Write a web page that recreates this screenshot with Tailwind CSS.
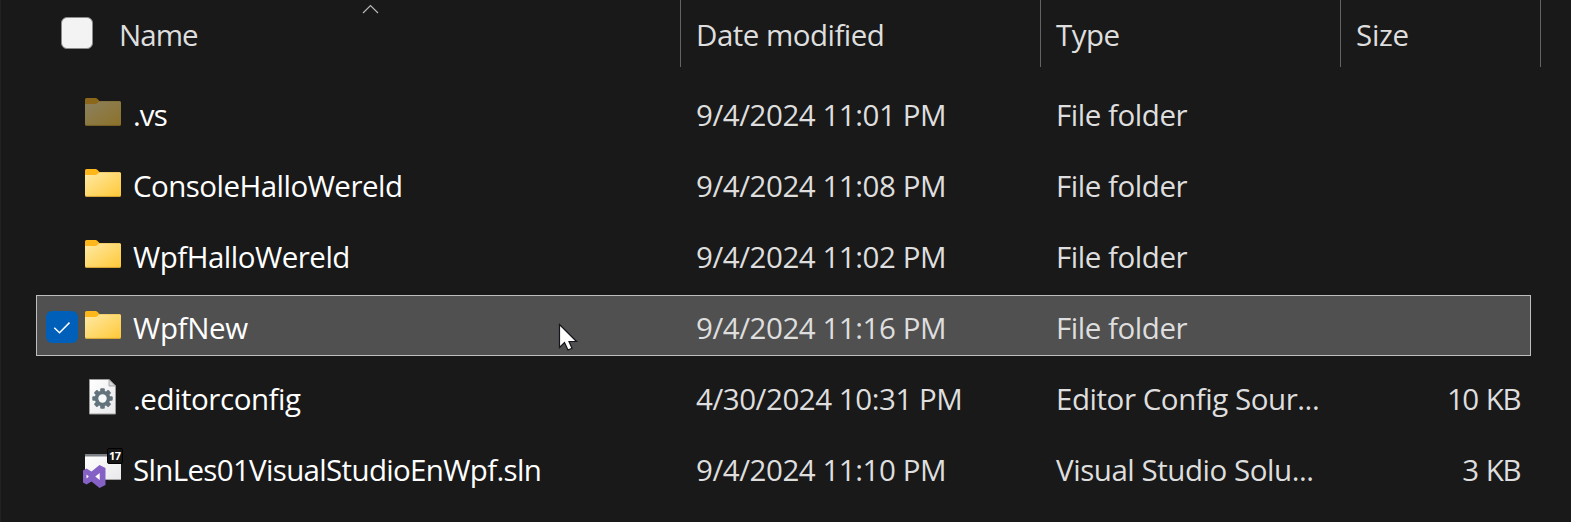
<!DOCTYPE html>
<html lang="en">
<head>
<meta charset="utf-8">
<title>Files</title>
<script src="https://cdn.jsdelivr.net/npm/@tailwindcss/browser@4"></script>
</head>
<body class="h-[522px] w-[1571px] overflow-hidden bg-[#191919] font-['Open_Sans','Noto_Sans',sans-serif] text-[29.5px] leading-[40px] text-[#dedede] whitespace-nowrap">
<svg class="absolute size-0">
  <defs>
    <linearGradient id="fg" x1="0" y1="0" x2="1" y2="1"><stop offset="0" stop-color="#ffe9a6"/><stop offset="1" stop-color="#ffc937"/></linearGradient>
    <linearGradient id="pg" x1="0" y1="0" x2="1" y2="1"><stop offset="0" stop-color="#fff"/><stop offset="1" stop-color="#e9e9ec"/></linearGradient>
    <symbol id="folder" viewBox="0 0 36 28">
      <path d="M0 1.5Q0 0 1.5 0H10.5Q11.5 0 12.300 .8L14.700 3.200H34.500Q36 3.200 36 4.700V12H0Z" fill="#fdb71a"/>
      <path d="M0 6H10.500Q11.500 6 12.300 5.200L13.500 3.900Q14.200 3.300 15 3.300H34.500Q36 3.300 36 4.800V26.300Q36 27.800 34.500 27.800H1.500Q0 27.800 0 26.300Z" fill="url(#fg)"/>
      <path d="M.5 26.500Q.7 27.400 1.600 27.400H34.400Q35.300 27.400 35.500 26.500" fill="none" stroke="#d9a32c" stroke-width=".8"/>
    </symbol>
  </defs>
</svg>
<main class="relative flex h-full flex-col border-l border-[#222222]">
  <header class="flex h-[67px]">
    <div class="relative flex w-[680px] border-r border-[#636363] pl-[60px] pt-[17px]">
      <span class="size-[32px] rounded-[6px] border border-[#8b8b8b] bg-[#f3f3f3]"></span>
      <span class="ml-[26px] -mt-[2px] tracking-[-0.95px]">Name</span>
      <svg class="absolute left-[361px] top-[4px] h-[10px] w-[17px]" viewBox="0 0 17 10" fill="none" stroke="#b8b8b8" stroke-width="1.200"><path d="M1 9 8.500 1.500 16 9"/></svg>
    </div>
    <div class="w-[360px] border-r border-[#636363] pl-[15px] pt-[15px] tracking-[-0.52px]">Date modified</div>
    <div class="w-[300px] border-r border-[#636363] pl-[15px] pt-[15px] tracking-[-0.5px]">Type</div>
    <div class="w-[200px] border-r border-[#636363] pl-[15px] pt-[15px] tracking-[-0.3px]">Size</div>
  </header>
  <section class="mt-[15px] ml-[35px] flex w-[1495px] flex-col gap-[10px] tracking-[-0.45px]">
    <div class="flex h-[61px] border border-transparent">
      <div class="flex w-[659px] pl-[48px] text-white"><svg class="mt-[15px] h-[28px] w-[36px] opacity-50"><use href="#folder"/></svg><span class="ml-[12px] mt-[12px] tracking-[-0.9px]">.vs</span></div>
      <div class="w-[360px] pt-[12px]">9/4/2024 11:01 PM</div>
      <div class="w-[300px] pt-[12px]">File folder</div>
    </div>
    <div class="flex h-[61px] border border-transparent">
      <div class="flex w-[659px] pl-[48px] text-white"><svg class="mt-[15px] h-[28px] w-[36px]"><use href="#folder"/></svg><span class="ml-[12px] mt-[12px] tracking-[-0.53px]">ConsoleHalloWereld</span></div>
      <div class="w-[360px] pt-[12px]">9/4/2024 11:08 PM</div>
      <div class="w-[300px] pt-[12px]">File folder</div>
    </div>
    <div class="flex h-[61px] border border-transparent">
      <div class="flex w-[659px] pl-[48px] text-white"><svg class="mt-[15px] h-[28px] w-[36px]"><use href="#folder"/></svg><span class="ml-[12px] mt-[12px] tracking-[-0.5px]">WpfHalloWereld</span></div>
      <div class="w-[360px] pt-[12px]">9/4/2024 11:02 PM</div>
      <div class="w-[300px] pt-[12px]">File folder</div>
    </div>
    <div class="flex h-[61px] border border-[#bebebe] bg-[#505050]">
      <div class="flex w-[659px] pl-[9px] text-white">
        <span class="mt-[15px] mr-[7px] size-[32px] rounded-[6px] bg-[#005fb8]"><svg class="size-[32px]" viewBox="0 0 32 32" fill="none" stroke="#fff" stroke-width="1.500"><path d="M8.300 16.700 13.500 21.700 23.500 11.600"/></svg></span>
        <svg class="mt-[15px] h-[28px] w-[36px]"><use href="#folder"/></svg><span class="ml-[12px] mt-[12px] tracking-[-0.35px]">WpfNew</span></div>
      <div class="w-[360px] pt-[12px]">9/4/2024 11:16 PM</div>
      <div class="w-[300px] pt-[12px]">File folder</div>
    </div>
    <div class="flex h-[61px] border border-transparent">
      <div class="flex w-[659px] pl-[52px] text-white">
        <svg class="mt-[12px] h-[36px] w-[27px]" viewBox="0 0 27 36">
          <path d="M.5.500H20L26.500 7V35H.5Z" fill="url(#pg)" stroke="#9b9b9b"/>
          <path d="M20 .5V7H26.500Z" fill="#d8dadd" stroke="#9b9b9b" stroke-width=".8"/>
          <g transform="translate(13.500 19.500)" fill="#63747c"><circle r="7.800"/><g id="t"><rect x="-2.300" y="-10.200" width="4.600" height="20.400" rx="1"/><rect x="-10.200" y="-2.300" width="20.400" height="4.600" rx="1"/></g><use href="#t" transform="rotate(45)"/><circle r="4.200" fill="#f8f9fa"/></g>
        </svg><span class="ml-[17px] mt-[12px]">.editorconfig</span></div>
      <div class="w-[360px] pt-[12px]">4/30/2024 10:31 PM</div>
      <div class="w-[300px] pt-[12px]">Editor Config Sour...</div>
      <div class="flex-1 pt-[12px] pr-[10px] text-right tracking-[-1.5px] [word-spacing:2px]">10 KB</div>
    </div>
    <div class="flex h-[61px] border border-transparent">
      <div class="flex w-[659px] pl-[46px] text-white">
        <svg class="mt-[10px] h-[41px] w-[41px]" viewBox="0 0 41 41">
          <path d="M2 6H38V32H2Z" fill="url(#pg)"/><path d="M2 6H38V8.500H2Z" fill="#7d8085"/><path d="M2 31.500H38" stroke="#a5a5a5"/>
          <rect x="24.500" y=".5" width="15" height="15" rx="1.500" fill="#161616" stroke="#000"/>
          <text x="31.800" y="11.800" text-anchor="middle" font-size="11" font-weight="700" fill="#fff" font-family="Open Sans">17</text>
          <path d="M0 22.500 3.500 20.500 8.500 23.500 16.500 17 22.500 20V37L16.500 40 8.500 33.500 3.500 36.500 0 34.500Z" fill="#8661c5"/>
          <path d="M3.500 26.500V30.500L5.800 28.500ZM12.300 28.500 16.700 25V32Z" fill="#fff"/>
        </svg><span class="ml-[9px] mt-[12px] tracking-[-0.67px]">SlnLes01VisualStudioEnWpf.sln</span></div>
      <div class="w-[360px] pt-[12px]">9/4/2024 11:10 PM</div>
      <div class="w-[300px] pt-[12px]">Visual Studio Solu...</div>
      <div class="flex-1 pt-[12px] pr-[10px] text-right tracking-[-1.5px] [word-spacing:2px]">3 KB</div>
    </div>
  </section>
  <svg class="absolute left-[557px] top-[323px] h-[30px] w-[20px]" viewBox="0 0 20 30"><path d="M1.500 1.500V24.500L6.500 19.500 10 27 14 25.300 11 18.500H18.500Z" fill="#fff" stroke="#14141c" stroke-width="1.200"/></svg>
</main>
</body>
</html>
